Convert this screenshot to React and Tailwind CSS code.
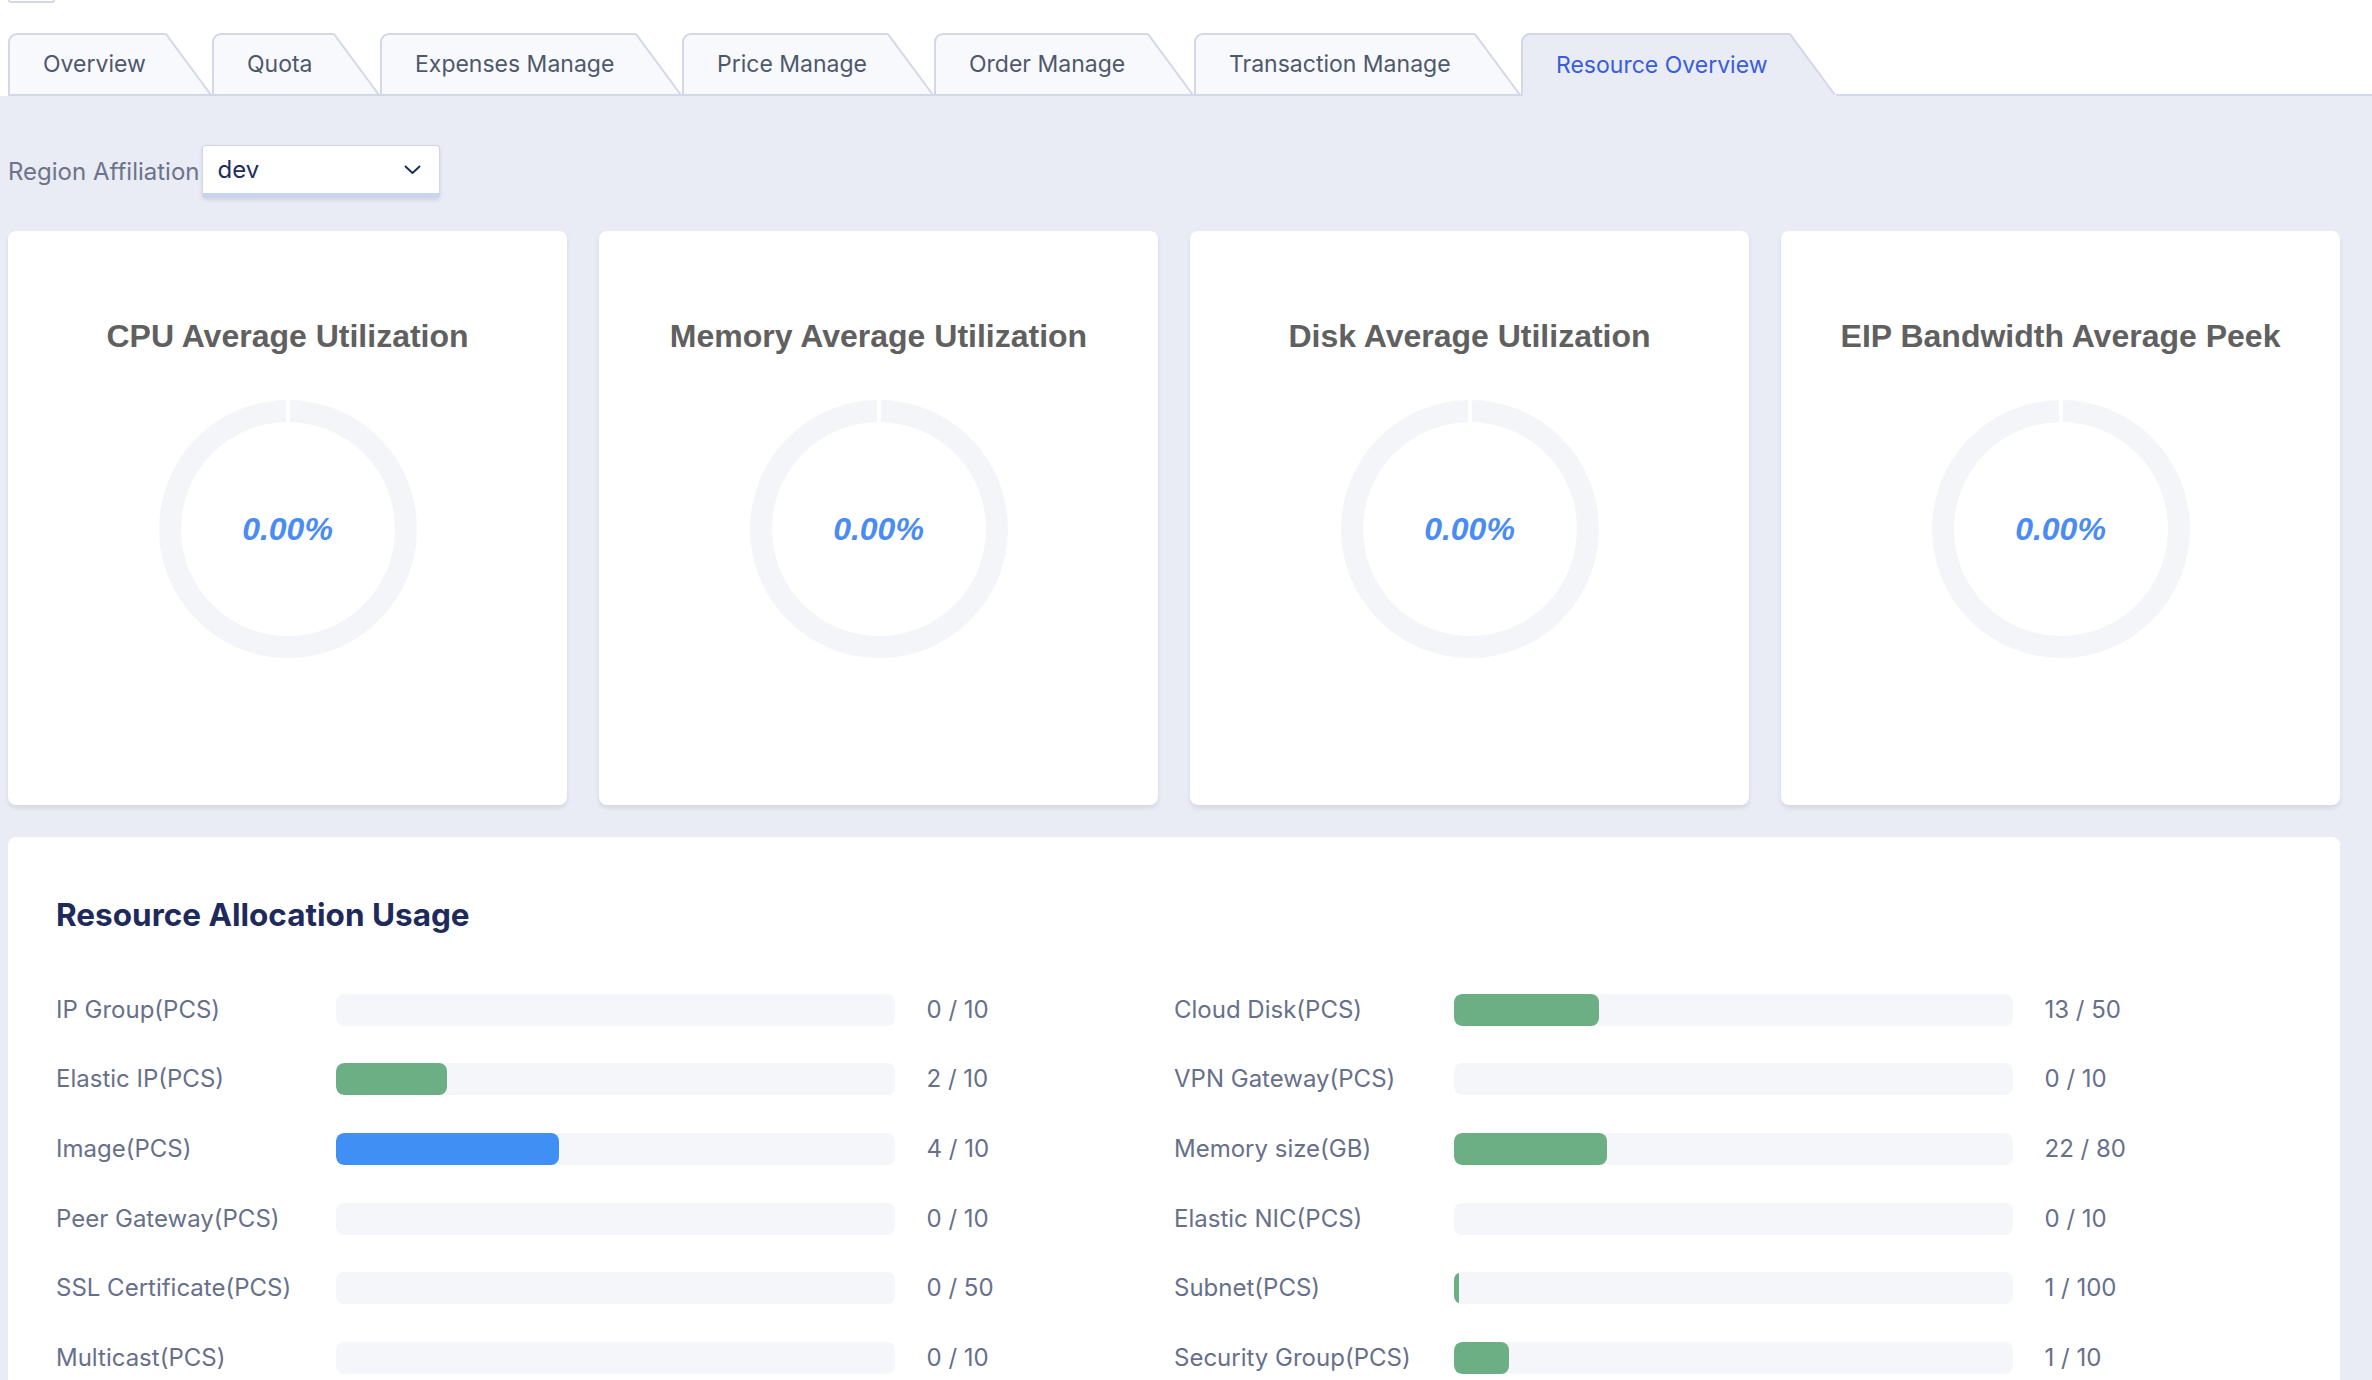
const tabs = [
  { name: 'Overview', w: 158 },
  { name: 'Quota', w: 122 },
  { name: 'Expenses Manage', w: 256 },
  { name: 'Price Manage', w: 206 },
  { name: 'Order Manage', w: 214 },
  { name: 'Transaction Manage', w: 281 },
  { name: 'Resource Overview', w: 269, active: true },
];

const gauges = [
  'CPU Average Utilization',
  'Memory Average Utilization',
  'Disk Average Utilization',
  'EIP Bandwidth Average Peek',
];

const left = [
  { label: 'IP Group(PCS)', used: 0, total: 10 },
  { label: 'Elastic IP(PCS)', used: 2, total: 10 },
  { label: 'Image(PCS)', used: 4, total: 10, blue: true },
  { label: 'Peer Gateway(PCS)', used: 0, total: 10 },
  { label: 'SSL Certificate(PCS)', used: 0, total: 50 },
  { label: 'Multicast(PCS)', used: 0, total: 10 },
];

const right = [
  { label: 'Cloud Disk(PCS)', used: 13, total: 50 },
  { label: 'VPN Gateway(PCS)', used: 0, total: 10 },
  { label: 'Memory size(GB)', used: 22, total: 80 },
  { label: 'Elastic NIC(PCS)', used: 0, total: 10 },
  { label: 'Subnet(PCS)', used: 1, total: 100 },
  { label: 'Security Group(PCS)', used: 1, total: 10 },
];

function Tab({ tab }) {
  const fill = tab.active ? '#e9ebf5' : '#f8f9fc';
  return (
    <div className="flex items-end">
      <div
        className={`h-[63px] flex items-center pl-[33px] rounded-tl-[9px] border-l-2 border-t-2 border-[#d4d7ea] text-[23px] ${tab.active ? 'bg-[#e9ebf5] text-[#3a5ddb] border-b-0' : 'bg-[#f8f9fc] text-[#4e586c] border-b-2 border-b-[#d4d7ea]'}`}
        style={{ width: tab.w }}
      >
        {tab.name}
      </div>
      <svg width="46" height="63" className="block shrink-0">
        <polygon points={`0,1 45,${tab.active ? 63 : 61} 0,${tab.active ? 63 : 61}`} fill={fill} />
        <line x1="0" y1="1" x2="45" y2="62" stroke="#d4d7ea" strokeWidth="2" />
        {!tab.active && <rect x="0" y="61" width="46" height="2" fill="#d4d7ea" />}
      </svg>
    </div>
  );
}

function Gauge({ title }) {
  return (
    <div className="h-[574px] bg-white rounded-[8px] shadow-[0_3px_4px_rgba(40,45,80,0.10)] flex flex-col items-center pt-[86px]">
      <h3 className="font-['Liberation_Sans',Arial,sans-serif] font-bold text-[32px] leading-[38px] text-[#606060]">{title}</h3>
      <div className="mt-[45px] grid place-items-center">
        <svg width="258" height="258" className="[grid-area:1/1]">
          <circle cx="129" cy="129" r="118" fill="none" stroke="#f4f5f9" strokeWidth="22" />
          <rect x="127" y="0" width="4" height="24" fill="#ffffff" />
        </svg>
        <span className="[grid-area:1/1] font-['Liberation_Sans',Arial,sans-serif] italic font-semibold text-[32px] text-[#4b8bf4]">0.00%</span>
      </div>
    </div>
  );
}

function UsageRow({ row }) {
  const pct = (row.used / row.total) * 100;
  return (
    <div className="flex items-center h-[32px]">
      <div className="w-1/4 text-[24px] text-[#67708a]">{row.label}</div>
      <div className="w-1/2 h-[32px] bg-[#f5f6fa] rounded-[8px] overflow-hidden">
        {pct > 0 && (
          <div
            className={`h-full rounded-[8px] ${row.blue ? 'bg-[#3f8ff5]' : 'bg-[#6daf85]'}`}
            style={{ width: `${pct}%` }}
          />
        )}
      </div>
      <div className="w-1/4 pl-[32px] text-[24px] text-[#67708a]">{row.used} / {row.total}</div>
    </div>
  );
}

export default function App() {
  return (
    <div className="w-[2372px] h-[1380px] overflow-hidden bg-white font-['Inter',sans-serif]">
      {/* leftover control above the tabs */}
      <div className="ml-[8px] w-[47px] h-[3px] border-2 border-t-0 border-[#d4d7ea] rounded-b-[5px]" />

      {/* Tabs */}
      <div className="mt-[30px] flex items-end pl-[8px]">
        {tabs.map(t => <Tab key={t.name} tab={t} />)}
        <div className="flex-1 border-b-2 border-[#d4d7ea]" />
      </div>

      {/* Content */}
      <div className="bg-[#e9ebf5] h-full pl-[8px] pr-[32px] pt-[49px]">
        <div className="flex items-center gap-[3px]">
          <span className="text-[24px] text-[#6b7489]">Region Affiliation</span>
          <div className="w-[238px] h-[53px] bg-white border border-[#d2d6e2] border-b-[5px] border-b-[#c8d5f1] rounded-[4px] shadow-[0_2px_4px_rgba(0,0,0,0.10)] flex items-center justify-between pl-[14px] pr-[18px]">
            <span className="text-[24px] text-[#1f2d5c]">dev</span>
            <svg width="17" height="10" viewBox="0 0 17 10" fill="none">
              <polyline points="1.5,1.5 8.5,8 15.5,1.5" stroke="#1f2d5c" strokeWidth="2" strokeLinecap="round" strokeLinejoin="round" />
            </svg>
          </div>
        </div>

        <div className="mt-[33px] grid grid-cols-4 gap-[32px]">
          {gauges.map(g => <Gauge key={g} title={g} />)}
        </div>

        <div className="mt-[32px] bg-white rounded-[8px] px-[48px] pt-[59px] pb-[48px]">
          <h2 className="text-[31.5px] leading-[38px] font-bold text-[#1f2a5c]">Resource Allocation Usage</h2>
          <div className="mt-[59.5px] grid grid-cols-2">
            <div className="flex flex-col gap-[37.7px]">
              {left.map(r => <UsageRow key={r.label} row={r} />)}
            </div>
            <div className="flex flex-col gap-[37.7px]">
              {right.map(r => <UsageRow key={r.label} row={r} />)}
            </div>
          </div>
        </div>
      </div>
    </div>
  );
}
